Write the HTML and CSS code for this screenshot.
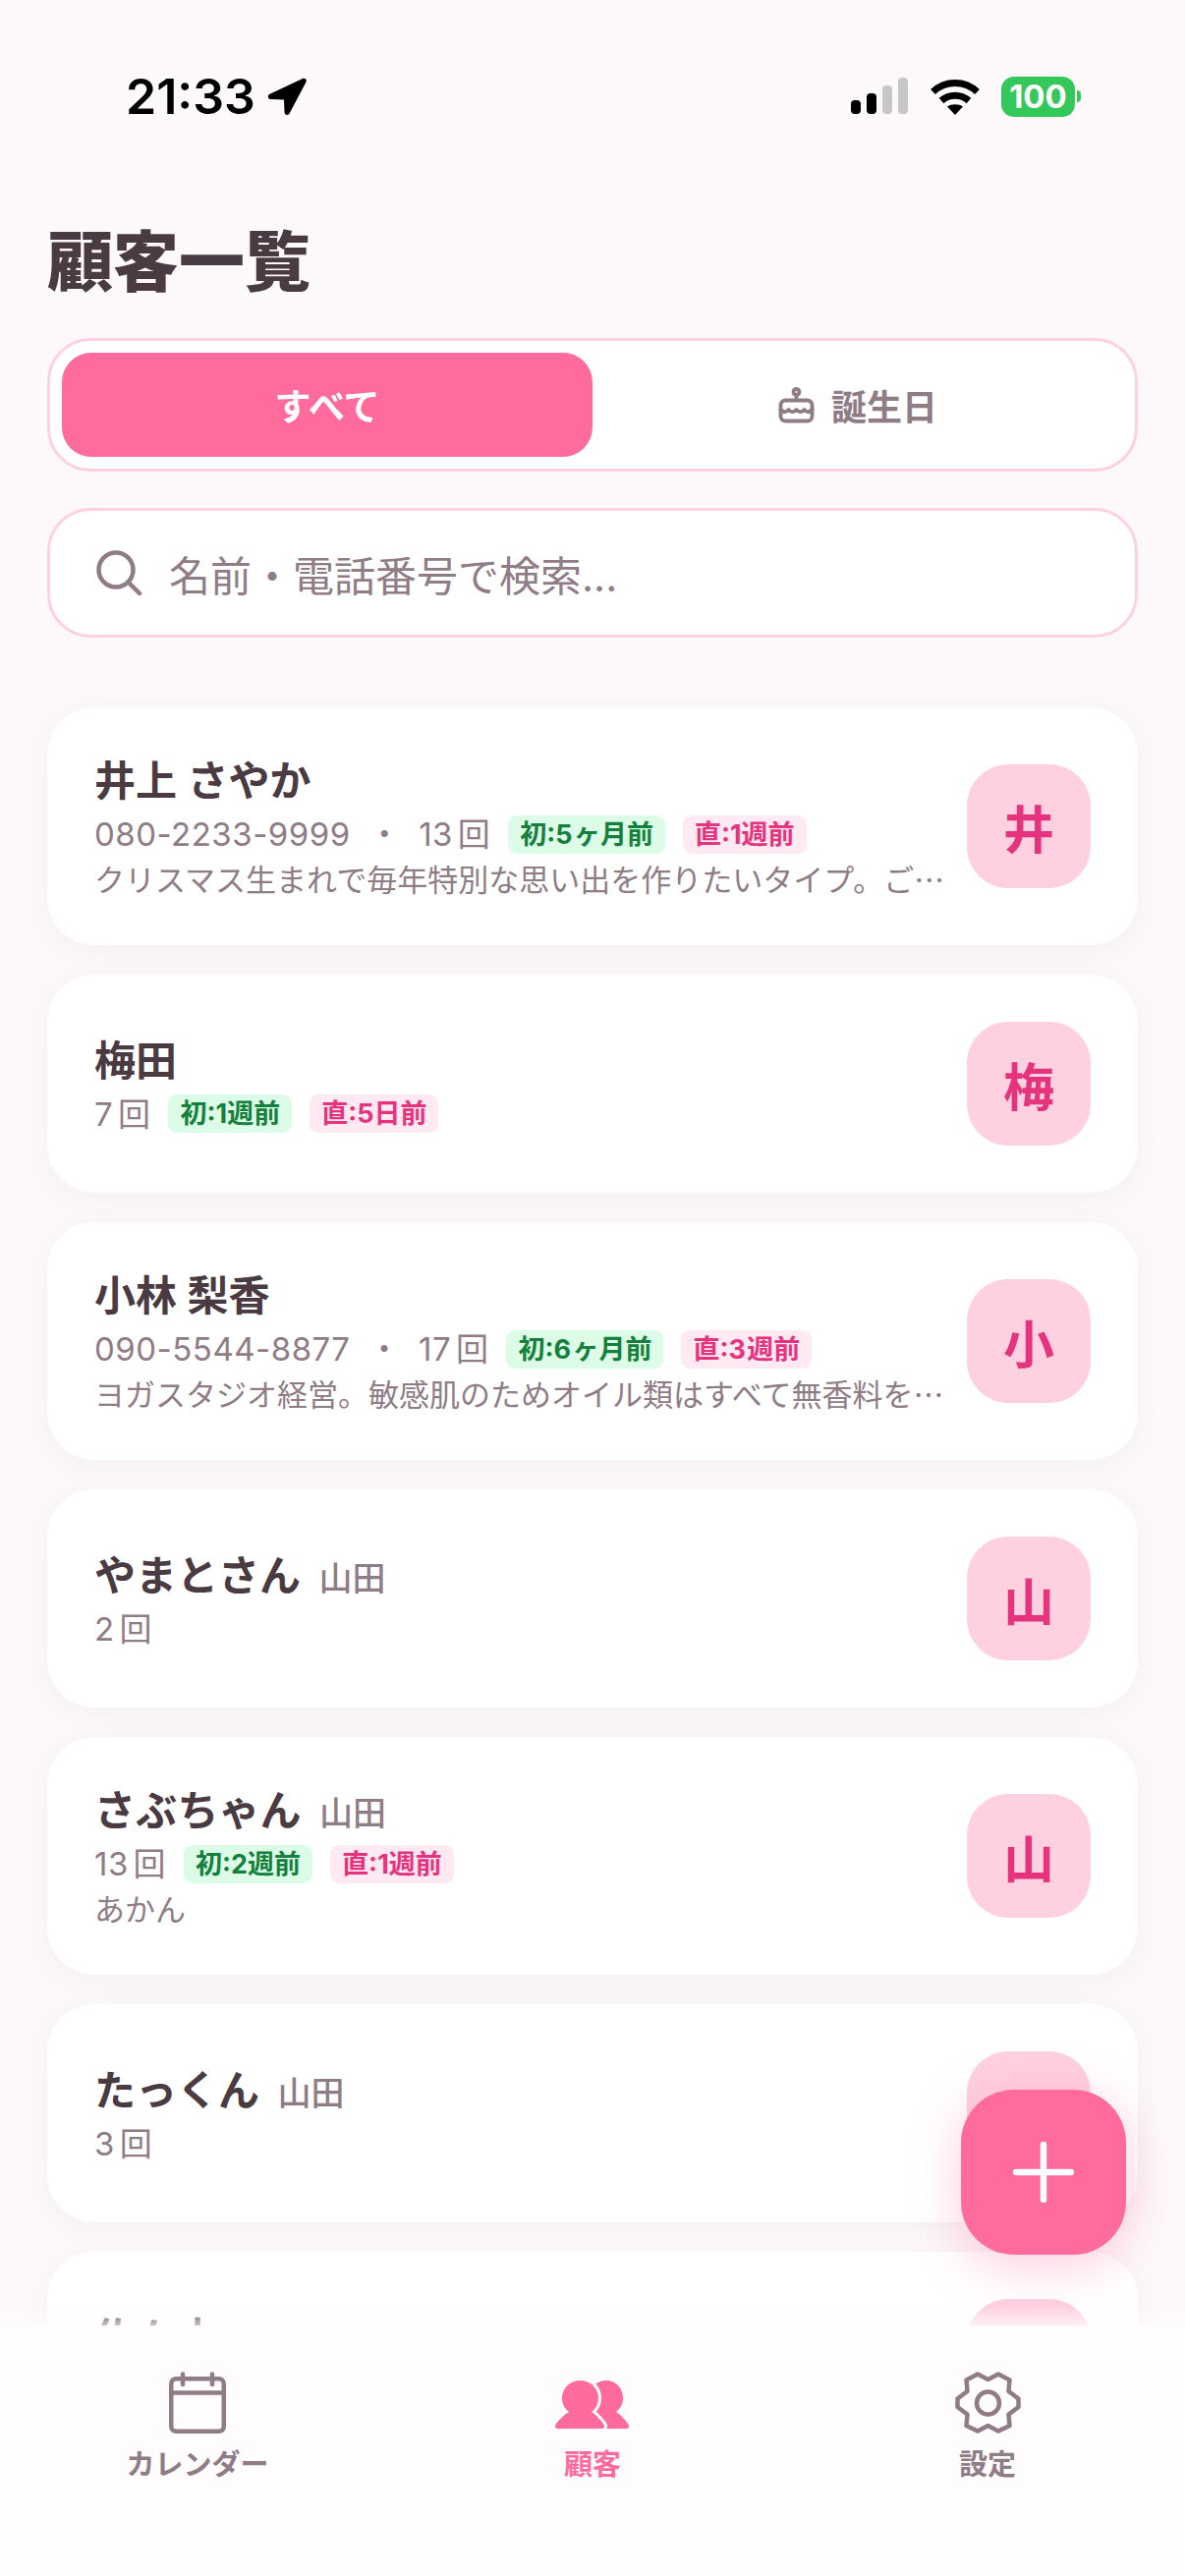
FILE: index.html
```html
<!DOCTYPE html>
<html lang="ja">
<head>
  <meta charset="UTF-8">
  <meta name="viewport" content="width=device-width, initial-scale=1.0">
  <title>顧客一覧</title>
  <link rel="stylesheet" href="styles.css">
</head>
<body>
  <div class="app">
    <div class="status-bar">
      <div class="status-left">
        <span class="status-time">21:33</span>
        <svg class="status-arrow" viewBox="0 0 40 40"><path d="M36 2 3 17.500c-3.500 1.700-2.500 5.500 1 5.600l13 .4.500 12.500c.1 3.400 4 4.200 5.300 1L39.500 5.500C40.500 3 38.500 .9 36 2z" fill="#000"/></svg>
      </div>
      <div class="status-right">
        <svg class="status-signal" viewBox="0 0 58 38">
          <rect x="0" y="23" width="10" height="14" rx="4" fill="#000"/>
          <rect x="16" y="16" width="10" height="21" rx="4" fill="#000"/>
          <rect x="32" y="8" width="10" height="29" rx="4" fill="#c8c6c8"/>
          <rect x="48" y="0" width="10" height="37" rx="4" fill="#c8c6c8"/>
        </svg>
        <svg class="status-wifi" viewBox="0 0 50 37" fill="none" stroke="#000" stroke-width="7">
          <path d="M2.500 13.500C15 1.500 35 1.500 47.500 13.500"/>
          <path d="M11 22.500c8-7 20-7 28 0"/>
          <path d="M17 28.500 25 37l8-8.500c-4-3-12-3-16 0z" fill="#000" stroke="none"/>
        </svg>
        <div class="status-battery">
          <span class="battery-body">100</span>
          <span class="battery-tip"></span>
        </div>
      </div>
    </div>

    <h1 class="page-title">顧客一覧</h1>

    <div class="segment">
      <div class="segment-item active">すべて</div>
      <div class="segment-item">
        <svg class="segment-icon" viewBox="0 0 37 37" fill="none" stroke="#8f7c86" stroke-width="3.800" stroke-linecap="round" stroke-linejoin="round">
          <circle cx="18.500" cy="5" r="3"/>
          <path d="M18.500 8v5"/>
          <rect x="2.500" y="13.500" width="32" height="21" rx="5"/>
          <path d="M2.500 23c3.200 3 5.200 3 8 0 2.800 3 5.200 3 8 0 2.800 3 5.200 3 8 0 2.800 3 4.800 3 8 0"/>
        </svg>
        <span>誕生日</span>
      </div>
    </div>

    <div class="search">
      <svg class="search-icon" viewBox="0 0 48 48" fill="none" stroke="#8f7c86" stroke-width="4.500" stroke-linecap="round"><circle cx="21" cy="21" r="17.500"/><path d="m34 34 11 11"/></svg>
      <span class="search-text">名前・電話番号で検索...</span>
    </div>

    <div class="list">
      <div class="card">
        <div class="card-body">
          <div class="card-name">井上 さやか</div>
          <div class="card-meta">
            <span>080-2233-9999</span><span>・</span><span>13 回</span>
            <span class="badge green">初:5 ヶ月前</span><span class="badge pink">直:1週前</span>
          </div>
          <div class="card-note">クリスマス生まれで毎年特別な思い出を作りたいタイプ。ご…</div>
        </div>
        <div class="avatar">井</div>
      </div>

      <div class="card">
        <div class="card-body">
          <div class="card-name">梅田</div>
          <div class="card-meta">
            <span>7 回</span>
            <span class="badge green">初:1週前</span><span class="badge pink">直:5日前</span>
          </div>
        </div>
        <div class="avatar">梅</div>
      </div>

      <div class="card">
        <div class="card-body">
          <div class="card-name">小林 梨香</div>
          <div class="card-meta">
            <span>090-5544-8877</span><span>・</span><span>17 回</span>
            <span class="badge green">初:6 ヶ月前</span><span class="badge pink">直:3 週前</span>
          </div>
          <div class="card-note">ヨガスタジオ経営。敏感肌のためオイル類はすべて無香料を…</div>
        </div>
        <div class="avatar">小</div>
      </div>

      <div class="card">
        <div class="card-body">
          <div class="card-name">やまとさん <small>山田</small></div>
          <div class="card-meta"><span>2 回</span></div>
        </div>
        <div class="avatar">山</div>
      </div>

      <div class="card">
        <div class="card-body">
          <div class="card-name">さぶちゃん <small>山田</small></div>
          <div class="card-meta">
            <span>13 回</span>
            <span class="badge green">初:2週前</span><span class="badge pink">直:1週前</span>
          </div>
          <div class="card-note">あかん</div>
        </div>
        <div class="avatar">山</div>
      </div>

      <div class="card">
        <div class="card-body">
          <div class="card-name">たっくん <small>山田</small></div>
          <div class="card-meta"><span>3 回</span></div>
        </div>
        <div class="avatar">山</div>
      </div>

      <div class="card">
        <div class="card-body">
          <div class="card-name">佐々木</div>
          <div class="card-meta"></div>
        </div>
        <div class="avatar"></div>
      </div>
    </div>

    <div class="tab-bar">
      <div class="tab">
        <svg class="tab-icon" viewBox="0 0 58 64" fill="none" stroke="#8f7c86" stroke-width="4.500" stroke-linecap="round" stroke-linejoin="round">
          <rect x="2.250" y="7.250" width="53.500" height="53.500" rx="5"/>
          <path d="M2.250 21.500h53.500M14 2.500V13M44 2.500V13"/>
        </svg>
        <span>カレンダー</span>
      </div>
      <div class="tab active">
        <svg class="tab-people" viewBox="0 0 76 49">
          <path d="M52 0C62 0 69 8 69 18 69 24 66 29 62 32 67 35 71 40 74 44 76 47 75 49 72 49H34V18C34 8 42 0 52 0Z" fill="#ff6b9d"/>
          <path d="M25.500 0C36 0 44 8 44 18 44 24 41 29 37 32 42 35 46 40 49 44 51 47 50 49 47 49H3C0 49-1 47 1 44 4 40 9 35 14 32 10 29 7 24 7 18 7 8 15 0 25.500 0Z" fill="#ff6b9d" stroke="#fffcfd" stroke-width="6" paint-order="stroke"/>
        </svg>
        <span>顧客</span>
      </div>
      <div class="tab">
        <svg class="tab-icon" viewBox="0 0 67 64" fill="none" stroke="#8f7c86" stroke-width="4.500" stroke-linejoin="round">
          <path d="M33.500 8 44 2.500 55.500 8.500 54.500 20 64.500 27.500V36L54.500 43.500 55.500 55 44 60.500 33.500 55 23 60.500 11.500 55 12.500 43.500 2.500 36V27.500L12.500 20 11.500 8.500 23 2.500Z"/>
          <circle cx="33.500" cy="32" r="11.500"/>
        </svg>
        <span>設定</span>
      </div>
    </div>

    <div class="fab">
      <svg class="fab-icon" viewBox="0 0 62 62"><path d="M31 3v56M3 31h56" stroke="#fff" stroke-width="6.500" stroke-linecap="round"/></svg>
    </div>
  </div>
</body>
</html>
```

FILE: styles.css
```css
* {
  margin: 0;
  padding: 0;
  box-sizing: border-box;
}

html, body {
  width: 1206px;
  height: 2622px;
  overflow: hidden;
  background: #fdf9fa;
  font-family: Inter, "Noto Sans CJK JP", sans-serif;
  color: #4a3a42;
}

.app {
  width: 1206px;
  height: 2622px;
  display: flex;
  flex-direction: column;
  position: relative;
  overflow: hidden;
}

/* status bar */
.status-bar {
  height: 130px;
  flex: none;
  display: flex;
  align-items: center;
  justify-content: space-between;
  padding: 66px 106px 0 128px;
}

.status-left {
  display: flex;
  align-items: center;
  gap: 12px;
}

.status-time {
  font-size: 50px;
  font-weight: 600;
  line-height: 64px;
  color: #000;
}

.status-arrow {
  width: 40px;
  height: 40px;
}

.status-right {
  display: flex;
  align-items: center;
}

.status-signal {
  width: 58px;
  height: 38px;
  margin-right: 23px;
}

.status-wifi {
  width: 50px;
  height: 37px;
  margin-right: 22px;
}

.status-battery {
  display: flex;
  align-items: center;
  gap: 2px;
}

.battery-body {
  width: 75px;
  height: 41px;
  border-radius: 13px;
  background: #34c759;
  color: #fff;
  font-size: 33px;
  font-weight: 700;
  line-height: 41px;
  text-align: center;
}

.battery-tip {
  width: 4px;
  height: 12px;
  border-radius: 0 6px 6px 0;
  background: #34c759;
}

/* header */
.page-title {
  font-size: 67px;
  font-weight: 900;
  line-height: 92px;
  margin: 91px 48px 0;
  flex: none;
}

.segment {
  height: 136px;
  margin: 31px 48px 0;
  padding: 12px;
  flex: none;
  display: flex;
  background: #fff;
  border: 3px solid #ffd1e0;
  border-radius: 44px;
}

.segment-item {
  flex: 1;
  display: flex;
  align-items: center;
  justify-content: center;
  gap: 17px;
  border-radius: 30px;
  font-size: 36px;
  font-weight: 600;
  color: #8f7c86;
}

.segment-item.active {
  background: #ff6b9d;
  color: #fff;
  font-size: 37px;
}

.segment-icon {
  width: 37px;
  height: 37px;
}

.search {
  height: 132px;
  margin: 37px 48px 0;
  padding: 0 46px;
  flex: none;
  display: flex;
  align-items: center;
  gap: 27px;
  background: #fff;
  border: 3px solid #ffd1e0;
  border-radius: 44px;
}

.search-icon {
  width: 48px;
  height: 48px;
}

.search-text {
  font-size: 42px;
  color: #8f7c86;
}

/* customer list */
.list {
  flex: 1;
  min-height: 0;
  overflow: hidden;
  padding: 71px 48px 0;
  display: flex;
  flex-direction: column;
  gap: 30px;
}

.card {
  flex: none;
  display: flex;
  align-items: center;
  gap: 20px;
  padding: 48px;
  background: #fff;
  border-radius: 48px;
  box-shadow: 0 6px 30px rgba(74, 58, 66, 0.05);
}

.card-body {
  flex: 1;
  min-width: 0;
}

.card-name {
  height: 54px;
  font-size: 42px;
  font-weight: 600;
  line-height: 54px;
  color: #4a3a42;
}

.card-name small {
  font-size: 34px;
  font-weight: 500;
  color: #8f7c86;
  margin-left: 8px;
}

.card-meta {
  height: 40px;
  display: flex;
  align-items: center;
  gap: 18px;
  margin-top: 7px;
  font-size: 33px;
  letter-spacing: 0.5px;
  word-spacing: -5px;
  line-height: 40px;
  color: #8f7c86;
  white-space: nowrap;
}

.badge {
  height: 39px;
  padding: 0 12px;
  border-radius: 9px;
  font-size: 27px;
  font-weight: 700;
  letter-spacing: 0;
  line-height: 39px;
}

.badge.green {
  background: #dcfce7;
  color: #15803d;
}

.badge.pink {
  background: #ffe9f2;
  color: #e6337e;
}

.card-note {
  margin-top: 5px;
  font-family: "Noto Sans CJK JP", sans-serif;
  font-size: 31px;
  line-height: 40px;
  color: #8f7c86;
  white-space: nowrap;
}

.avatar {
  width: 126px;
  height: 126px;
  flex: none;
  display: flex;
  align-items: center;
  justify-content: center;
  background: #ffd1e0;
  border-radius: 42px;
  font-size: 52px;
  font-weight: 700;
  color: #e6337e;
}

/* bottom nav */
.tab-bar {
  height: 255px;
  flex: none;
  display: flex;
  justify-content: space-around;
  padding: 47px 0 0;
  background: #fffcfd;
  position: relative;
}

.tab-bar::before {
  content: "";
  position: absolute;
  left: 0;
  right: 0;
  top: -20px;
  height: 20px;
  background: linear-gradient(rgba(255, 252, 253, 0), rgba(255, 252, 253, 0.7));
}

.tab {
  width: 402px;
  display: flex;
  flex-direction: column;
  align-items: center;
  font-size: 29px;
  font-weight: 600;
  line-height: 40px;
  color: #8f7c86;
}

.tab.active {
  color: #ff6b9d;
}

.tab-icon {
  height: 64px;
  margin-bottom: 11px;
}

.tab-people {
  width: 76px;
  height: 49px;
  margin: 9px 0 17px;
}

.fab {
  width: 168px;
  height: 168px;
  position: absolute;
  right: 60px;
  top: 2127px;
  display: flex;
  align-items: center;
  justify-content: center;
  background: #ff6b9d;
  border-radius: 54px;
  box-shadow: 0 10px 50px rgba(255, 107, 157, 0.35);
}

.fab-icon {
  width: 62px;
  height: 62px;
}
```
